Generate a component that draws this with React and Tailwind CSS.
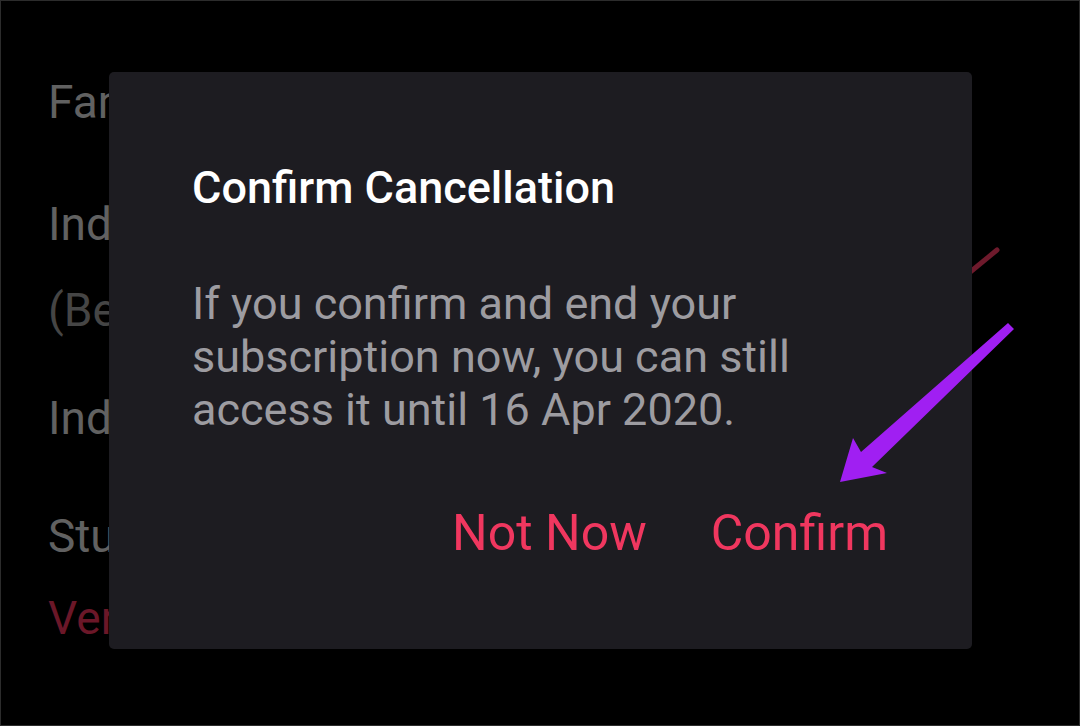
import React from "react";

const bgRows = [
  { text: "Family", cls: "mt-[78px] text-[#616161]" },
  { text: "Individual", cls: "mt-[76px] text-[#616161]" },
  { text: "(Best value)", cls: "mt-[40px] text-[#454545] text-[42px]" },
  { text: "Individual", cls: "mt-[62px] text-[#616161]" },
  { text: "Student", cls: "mt-[72px] text-[#616161]" },
  { text: "Verify", cls: "mt-[36px] text-[#6b1728] text-[42px]" },
];

export default function App() {
  return (
    <div
      className="relative h-[726px] w-[1080px] overflow-hidden border border-[#2c2c2c] bg-black"
      style={{ fontFamily: "Roboto, 'Noto Sans', sans-serif" }}
    >
      {/* list behind the dialog */}
      <div className="flex flex-col pl-[47px]">
        {bgRows.map((r) => (
          <div key={r.text + r.cls} className={`text-[46px] leading-[46px] ${r.cls}`}>
            {r.text}
          </div>
        ))}
      </div>

      {/* red check mark on the right */}
      <svg className="absolute left-[940px] top-[236px]" width="70" height="50" viewBox="0 0 70 50">
        <path d="M28 36 L56 13" stroke="#6e1a2c" strokeWidth="5" strokeLinecap="round" />
      </svg>

      {/* dialog */}
      <div className="absolute left-[108px] top-[71px] flex h-[577px] w-[863px] flex-col rounded-[5px] bg-[#1d1c21] pl-[83px] pr-[84px] pt-[90px]">
        <h2 className="text-[45px] font-medium leading-[52px] text-white">Confirm Cancellation</h2>
        <p className="mt-[63px] text-[45px] leading-[53px] text-[#9d9ca1]">
          If you confirm and end your
          <br />
          subscription now, you can still
          <br />
          access it until 16 Apr 2020.
        </p>
        <div className="mt-[68px] flex justify-end gap-[64px] text-[50px] leading-[58px] text-[#f0375f]">
          <span>Not Now</span>
          <span>Confirm</span>
        </div>
      </div>

      {/* purple arrow */}
      <svg className="absolute left-0 top-0" width="1080" height="726" viewBox="0 0 1080 726">
        <polygon
          points="839,481 852,437 860,451 1007,322 1013,328 871,466 886,472"
          fill="#a01ff2"
          strokeLinejoin="round"
        />
      </svg>
    </div>
  );
}
